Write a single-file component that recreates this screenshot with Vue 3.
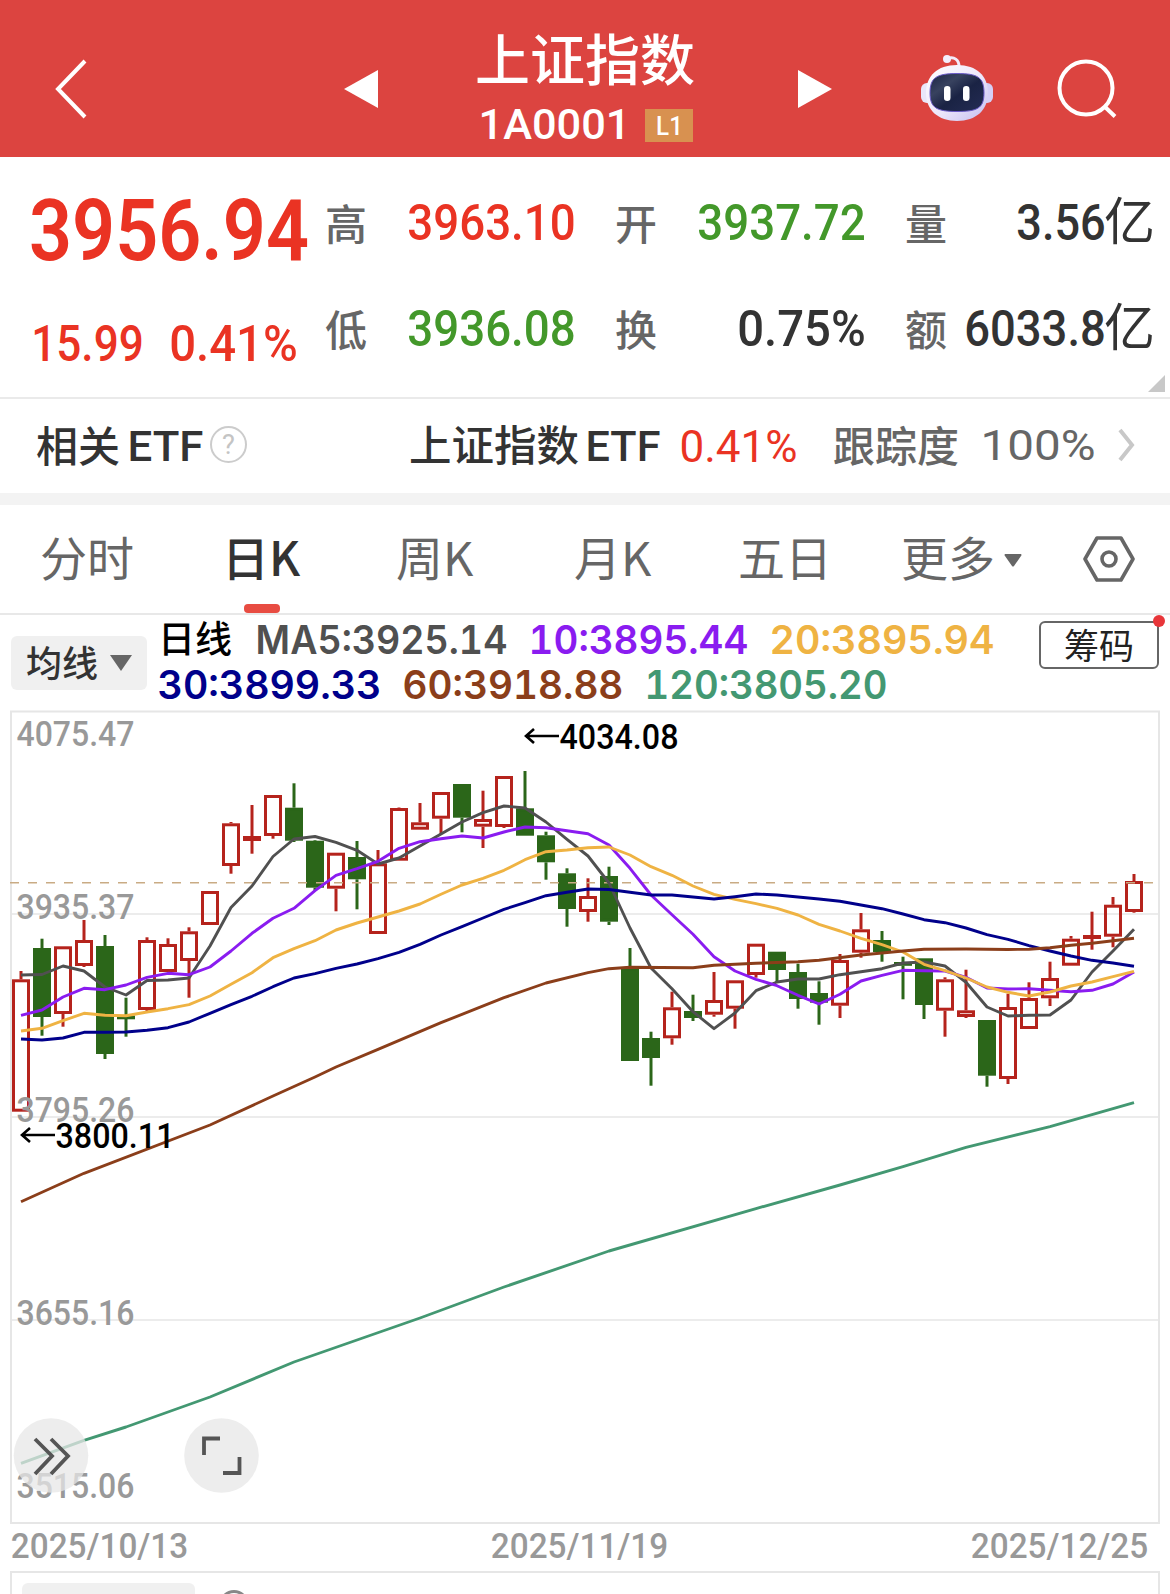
<script setup>
import { h } from 'vue'

/**
 * Index quote page: header, quote summary, period tabs and daily K chart
 */

// Condensed numerals: `cap` is the digit height, `w` the drawn width
const FitText = ({ text, w, cap }) => {
  const size = cap / 0.711
  return h('svg', { class: 'fit', width: w, height: cap }, [
    h('text', {
      x: -size * 0.035,
      y: cap,
      fill: 'currentColor',
      'font-size': size,
      textLength: w + size * 0.07,
      lengthAdjust: 'spacingAndGlyphs',
    }, text),
  ])
}
FitText.props = ['text', 'w', 'cap']

const stats = [
  { label: '高', value: '3963.10', w: 165, type: 'up' },
  { label: '开', value: '3937.72', w: 165, type: 'down' },
  { label: '量', value: '3.56', w: 86, unit: '亿' },
  { label: '低', value: '3936.08', w: 165, type: 'down' },
  { label: '换', value: '0.75%', w: 125 },
  { label: '额', value: '6033.8', w: 138, unit: '亿' },
]

const tabs = ['分时', '日K', '周K', '月K', '五日']

const averages = [
  [
    { text: 'MA5:3925.14', w: 249, color: '#505050' },
    { text: '10:3895.44', w: 217, color: '#8a1cf0' },
    { text: '20:3895.94', w: 222, color: '#efb343' },
  ],
  [
    { text: '30:3899.33', w: 221, color: '#00008b' },
    { text: '60:3918.88', w: 218, color: '#8b3e1a' },
    { text: '120:3805.20', w: 240, color: '#439872' },
  ],
]

const STEP = 21
const px = i => 21 + i * STEP

// direction, high, body top, body bottom, low
const candles = [
  ['r', 971, 979.3, 1111.7, 1111.7], ['g', 938.7, 948, 1017, 1035.7], ['r', 946.3, 946.3, 1014, 1026.7],
  ['r', 920, 940, 966, 967], ['g', 935, 946, 1054, 1059], ['g', 997.7, 1015.5, 1019, 1036.7],
  ['r', 937.3, 940, 1010, 1011.7], ['r', 938.3, 944, 972, 972], ['r', 927.3, 931.3, 961, 997.7],
  ['r', 891, 891, 925, 925], ['r', 822, 823.3, 866, 873.7], ['r', 805, 836, 841, 853.7],
  ['r', 795, 795, 836, 838.7], ['g', 783.3, 807.7, 840.7, 842], ['g', 840, 840.7, 887.7, 890.7],
  ['r', 852.7, 852.7, 888.7, 911.3], ['g', 841, 857, 879.3, 909.3], ['r', 850, 863.3, 934, 934],
  ['r', 807.5, 808, 860.7, 860.7], ['r', 803, 822.3, 829.7, 829.7], ['r', 792, 792, 818.7, 834],
  ['g', 784, 784, 817.7, 832.3], ['r', 790.7, 819, 826.7, 848], ['r', 776, 776, 827, 828],
  ['g', 771, 808.3, 835.7, 835.7], ['g', 831.7, 835.3, 862.3, 879.7], ['g', 868.3, 873.3, 909, 926.7],
  ['r', 878.3, 896, 912, 921.7], ['g', 866.7, 876, 921.7, 925], ['g', 948, 967.7, 1061, 1061],
  ['g', 1031.7, 1038, 1058, 1085.7], ['r', 991.7, 1007.3, 1038.3, 1044.7], ['g', 994.7, 1011, 1018, 1021],
  ['r', 972, 1000, 1014.7, 1016.7], ['r', 980.3, 980.3, 1008.7, 1028.7], ['r', 943.7, 943.7, 975, 977.7],
  ['g', 951.7, 951.7, 970, 982], ['g', 963.7, 972, 999, 1008.7], ['g', 981.3, 993, 1002.7, 1024.7],
  ['r', 954, 960, 1005.7, 1018], ['r', 913, 929.3, 952.7, 957.7], ['g', 931, 940, 952, 961.7],
  ['g', 956.7, 962, 965.7, 999.3], ['g', 958.3, 958.3, 1005, 1019], ['r', 977.3, 979.3, 1010.7, 1036.7],
  ['r', 969.7, 1010.3, 1017, 1018], ['g', 1020, 1020, 1075.7, 1086.7], ['r', 993.7, 1007, 1079, 1084],
  ['r', 982.3, 998, 1029, 1029], ['r', 961.7, 978, 998.3, 1006], ['r', 936, 938.7, 965.7, 965.7],
  ['r', 911.7, 935, 939, 949.7], ['r', 897, 904.7, 936.7, 947.3], ['r', 874, 881, 912, 912.7],
].map(([type, high, top, bottom, low], i) => ({ type, high, top, bottom, low, x: px(i) }))

// one y per candle
const dense = ys => ys.map((y, i) => `${px(i)},${y}`).join(' ')
// [candle index, y] pairs
const sparse = pts => pts.map(([i, y]) => `${px(i)},${y}`).join(' ')

const lines = [
  { color: '#505050', points: dense([975, 974.5, 966, 971, 987, 995, 980.5, 980, 978, 946, 907.5, 886, 856.5, 839, 836.5, 842.3, 850.3, 864, 858, 846, 834, 822, 812.7, 806, 808, 822, 839.3, 856, 883, 928, 968, 988.7, 1011.7, 1028.7, 1013, 990.7, 982, 979, 979, 974.7, 971.7, 968.7, 963, 962, 966, 982.3, 1007, 1016, 1015.3, 1015, 1000, 972, 951, 929.3]) },
  { color: '#8a1cf0', points: dense([1015.3, 1010, 997, 988.3, 989.7, 985, 977.3, 973.3, 974.7, 967, 951, 933.3, 918.3, 908.3, 890.7, 875.3, 868.7, 861.3, 848.3, 841.7, 838.7, 836, 838, 832, 827, 827.7, 830.7, 833.7, 845, 868.3, 895, 914.7, 934.3, 956.7, 971, 979.3, 985.7, 995.3, 1004, 994.3, 981, 975.3, 970.3, 970.7, 971, 977.3, 988, 989, 988.7, 990.3, 991.7, 990.3, 984, 972]) },
  { color: '#efb343', points: dense([1031, 1028.3, 1020.7, 1013.3, 1015.3, 1015.7, 1012, 1008.7, 1004.7, 996, 984.3, 972.7, 957.7, 948.7, 940.7, 930, 923, 917, 911, 904, 894.3, 885, 878.3, 870.3, 859.7, 851.7, 850, 847.7, 847, 855, 866.7, 875.3, 886, 894.3, 899.3, 903.7, 908.3, 915, 924.3, 931, 938.3, 944.7, 952, 964.3, 970.7, 978, 987, 992.3, 996, 992, 986, 982, 976.7, 971.3]) },
  { color: '#00008b', points: dense([1039, 1040, 1038, 1032.3, 1032.3, 1032, 1030.3, 1027.7, 1022, 1013.3, 1004.7, 996.3, 986.7, 978, 973.7, 968.3, 964, 958.7, 952.3, 944.3, 935, 926.7, 918, 909.3, 902.7, 895.7, 892.3, 889, 889.5, 892.3, 895, 895, 897, 899, 896.7, 894, 895, 897, 899, 901.3, 905, 908.7, 914, 919.7, 922.7, 928, 934.7, 939.3, 945.7, 951, 956, 960.3, 963, 966.3]) },
  { color: '#8b3e1a', points: sparse([[0, 1201.7], [3, 1173.3], [9, 1125], [12, 1096], [14, 1077], [15, 1067], [17, 1049.3], [20, 1022.7], [23, 997.7], [25, 983], [27, 972.7], [28, 968.7], [29, 967.3], [32, 967.7], [33, 965.3], [35, 963.3], [37, 961.7], [38, 960.3], [40, 955], [42, 951], [43, 949.3], [45, 949], [47, 949.5], [48, 949.3], [49, 947.7], [50, 945.3], [51, 943.3], [53, 938.3]]) },
  { color: '#439872', points: sparse([[0, 1463.3], [3, 1440.3], [5, 1427], [9, 1397], [13, 1362], [19, 1318], [23, 1287], [28, 1251], [35, 1208.6], [39, 1185], [42, 1166.7], [45, 1147.3], [49, 1126.7], [53, 1102.7]]) },
]

const axis = [
  { text: '4075.47', y: 746 },
  { text: '3935.37', y: 919 },
  { text: '3795.26', y: 1122 },
  { text: '3655.16', y: 1325 },
  { text: '3515.06', y: 1498 },
]

const dates = ['2025/10/13', '2025/11/19', '2025/12/25']
</script>

<template>
  <div class="page">
    <header class="header">
      <svg class="back" width="34" height="62" viewBox="0 0 34 62">
        <path d="M31 3 4 31l27 28" fill="none" stroke="#fff" stroke-width="4" />
      </svg>
      <svg class="prev" width="34" height="38" viewBox="0 0 34 38"><path d="M34 0v38L0 19z" fill="#fff" /></svg>
      <div class="title">
        <div class="name">上证指数</div>
        <div class="code">
          <FitText text="1A0001" :w="149" :cap="30" />
          <span class="badge"><FitText text="L1" :w="25" :cap="18" /></span>
        </div>
      </div>
      <svg class="next" width="34" height="38" viewBox="0 0 34 38"><path d="M0 0v38l34-19z" fill="#fff" /></svg>
      <svg class="robot" width="72" height="68" viewBox="0 0 72 68">
        <defs>
          <linearGradient id="shell" x1="0" y1="0" x2="1" y2="1">
            <stop offset="0" stop-color="#fff" />
            <stop offset=".55" stop-color="#ece6fa" />
            <stop offset="1" stop-color="#c3bdf0" />
          </linearGradient>
          <linearGradient id="visor" x1="0" y1="0" x2="1" y2="1">
            <stop offset="0" stop-color="#1b2444" />
            <stop offset=".3" stop-color="#38425f" />
            <stop offset=".55" stop-color="#1a2344" />
            <stop offset="1" stop-color="#242c54" />
          </linearGradient>
        </defs>
        <path d="M27 4.500c6-2 11 1 11 8" fill="none" stroke="#f3eafa" stroke-width="3" />
        <circle cx="26" cy="5" r="4" fill="#f3eefc" />
        <rect x="0" y="29" width="14" height="20" rx="6" fill="#e9e7fa" />
        <rect x="58" y="29" width="14" height="20" rx="6" fill="#d5cff6" />
        <path d="M36 11c20 0 31 11 31 28 0 17-12 28-31 28S5 56 5 39c0-17 11-28 31-28z" fill="url(#shell)" />
        <path d="M36 19.500c21 0 27 4 27 19.500s-7 18.500-27 18.500S9 54 9 39s6-19.500 27-19.500z" fill="url(#visor)" stroke="#6a5ac8" stroke-width="1" />
        <rect x="23" y="32" width="6.500" height="15" rx="3.200" fill="#fff" />
        <rect x="42" y="32" width="6.500" height="15" rx="3.200" fill="#fff" />
      </svg>
      <svg class="search" width="62" height="62" viewBox="0 0 62 62" fill="none" stroke="#fff" stroke-width="4">
        <circle cx="30" cy="30" r="26.500" />
        <path d="m48 48 11 10.500" />
      </svg>
    </header>

    <section class="quote">
      <div class="price up">
        <FitText class="bold" text="3956.94" :w="274" :cap="61" />
        <div class="change">
          <FitText text="15.99" :w="109" :cap="36" />
          <FitText text="0.41%" :w="125" :cap="36" />
        </div>
      </div>
      <div class="stats">
        <div v-for="s in stats" :key="s.label" class="stat">
          <span class="stat-label">{{ s.label }}</span>
          <span class="stat-value" :class="s.type">
            <FitText :text="s.value" :w="s.w" :cap="36" />
            <span v-if="s.unit" class="unit">{{ s.unit }}</span>
          </span>
        </div>
      </div>
      <svg class="corner" width="17" height="17" viewBox="0 0 17 17"><path d="M17 0v17H0z" fill="#c8c8c8" /></svg>
    </section>

    <section class="etf">
      <span class="etf-label">相关</span>
      <FitText class="etf-word" text="ETF" :w="73" :cap="30" />
      <span class="help"><FitText text="?" :w="11" :cap="19" /></span>
      <span class="etf-name">上证指数</span>
      <FitText class="etf-word" text="ETF" :w="72" :cap="30" />
      <FitText class="etf-rate up" text="0.41%" :w="115" :cap="32" />
      <span class="track">跟踪度</span>
      <FitText class="track-rate" text="100%" :w="112" :cap="30" />
      <svg class="more" width="20" height="34" viewBox="0 0 20 34">
        <path d="m3 2 12 15L3 32" fill="none" stroke="#c8c8c8" stroke-width="4" />
      </svg>
    </section>

    <nav class="tabs">
      <span v-for="(t, i) in tabs" :key="t" class="tab" :class="{ active: i === 1 }">{{ t }}</span>
      <span class="tab">更多<svg class="caret" width="18" height="13" viewBox="0 0 18 13"><path d="M1 0h16q1 1 0 2l-7 10q-1 1-2 0L1 2q-1-1 0-2z" fill="#666" /></svg></span>
      <svg class="settings" width="52" height="46" viewBox="0 0 52 46" fill="none" stroke="#666" stroke-width="3.600">
        <path d="M14 2h24l12 21-12 21H14L2 23z" stroke-linejoin="round" />
        <circle cx="26" cy="23" r="7" />
      </svg>
    </nav>

    <section class="legend">
      <button class="ma-button">
        <span>均线</span>
        <svg width="22" height="16" viewBox="0 0 22 16"><path d="M0 0h22L11 16z" fill="#666" /></svg>
      </button>
      <div class="ma-rows">
        <div v-for="(row, r) in averages" :key="r" class="ma-row">
          <span v-if="r === 0" class="ma-title">日线</span>
          <FitText v-for="m in row" :key="m.text" :text="m.text" :w="m.w" :cap="28" :style="{ color: m.color }" />
        </div>
      </div>
      <button class="chips">筹码<i class="dot"></i></button>
    </section>

    <section class="chart">
      <svg width="1170" height="820" viewBox="0 706 1170 820">
        <g stroke="#e6e6e6" stroke-width="2" fill="none">
          <rect x="11" y="711.500" width="1148" height="811.500" />
          <path d="M11 914H1159M11 1117H1159M11 1320H1159" stroke-width="1.500" />
        </g>
        <g v-for="c in candles" :key="c.x" :class="['candle', c.type]">
          <path v-if="c.high < c.top" :d="`M${c.x} ${c.high}V${c.top}`" />
          <path v-if="c.low > c.bottom" :d="`M${c.x} ${c.bottom}V${c.low}`" />
          <rect :x="c.x - 7.500" :y="c.top + 1.500" width="15" :height="Math.max(c.bottom - c.top - 3, 0.800)" />
        </g>
        <path d="M10 882.700H1153" stroke="#c9ab84" stroke-width="1.500" stroke-dasharray="9 9" />
        <polyline v-for="l in lines" :key="l.color" :points="l.points" :stroke="l.color" fill="none" stroke-width="2.900" stroke-linejoin="round" />
        <text v-for="a in axis" :key="a.text" class="axis" x="16.500" :y="a.y" textLength="118" lengthAdjust="spacingAndGlyphs">{{ a.text }}</text>
        <g fill="none" stroke="#000" stroke-width="2.600">
          <path d="M22 1135h33M30 1128l-8 7 8 7" />
          <path d="M526 736h33M534 729l-8 7 8 7" />
        </g>
        <text class="mark" x="55.500" y="1148" textLength="119" lengthAdjust="spacingAndGlyphs">3800.11</text>
        <text class="mark" x="559.500" y="749" textLength="119" lengthAdjust="spacingAndGlyphs">4034.08</text>
        <g fill="#e7e7e7" fill-opacity=".75">
          <circle cx="51" cy="1455.500" r="37.300" />
          <circle cx="221.500" cy="1455.500" r="37.300" />
        </g>
        <g fill="none" stroke="#555" stroke-width="3.800">
          <path d="m35 1439 17 17-17 18M51 1439l17 17-17 18" />
          <path d="M204 1455v-16.500h16M223 1473h16.500V1457" />
        </g>
      </svg>
    </section>

    <div class="dates">
      <FitText v-for="d in dates" :key="d" :text="d" :w="175" :cap="25" />
    </div>

    <section class="volume">
      <div class="volume-button"></div>
      <div class="volume-ring"></div>
    </section>
  </div>
</template>

<style>
body {
  margin: 0;
}
</style>

<style scoped>
.page {
  width: 1170px;
  height: 1594px;
  overflow: hidden;
  background: #fff;
  color: #333;
  font-family: 'Noto Sans CJK SC', sans-serif;
  line-height: 1;
}

.fit {
  display: block;
  flex: none;
  overflow: visible;
  font-family: Roboto, sans-serif;
  font-weight: 500;
}

.fit.bold {
  font-weight: 600;
}

.up {
  color: #ea3323;
}

.down {
  color: #43982a;
}

.header {
  display: flex;
  height: 157px;
  background: #dc4440;
  color: #fff;
}

.back {
  margin: 58px 0 0 54px;
}

.prev {
  margin: 70px 0 0 256px;
}

.title {
  width: 217px;
  margin: 29px 0 0 98px;
}

.name {
  margin-left: -1px;
  font-size: 55px;
  font-weight: 500;
  white-space: nowrap;
}

.code {
  display: flex;
  align-items: flex-start;
  margin: 25px 0 0 4px;
}

.badge {
  display: flex;
  align-items: center;
  justify-content: center;
  width: 48px;
  height: 33px;
  margin-left: 16px;
  background: #d89150;
}

.next {
  margin: 70px 0 0 105px;
}

.robot {
  margin: 54px 0 0 89px;
}

.search {
  margin: 58px 0 0 63px;
}

.quote {
  position: relative;
  display: flex;
  height: 240px;
  border-bottom: 2px solid #eaeaea;
}

.price {
  width: 293px;
  padding: 42px 0 0 32px;
}

.change {
  display: flex;
  gap: 29px;
  margin: 65px 0 0 1px;
}

.stats {
  display: grid;
  grid-template-columns: 249px 249px 249px;
  grid-auto-rows: 106px;
  column-gap: 41px;
  padding-top: 12px;
}

.stat,
.stat-value {
  display: flex;
  align-items: center;
}

.stat {
  justify-content: space-between;
}

.stat-label {
  padding-bottom: 1px;
  color: #666;
  font-size: 42px;
  font-weight: 500;
}

.unit {
  margin: -7px -1px 0 0;
  font-size: 51px;
}

.corner {
  position: absolute;
  right: 5px;
  bottom: 5px;
}

.etf {
  display: flex;
  align-items: center;
  height: 94px;
  padding: 0 32px 0 36px;
  border-bottom: 12px solid #f3f3f3;
  font-size: 42px;
  font-weight: 500;
}

.etf-label,
.etf-name,
.track {
  flex: none;
  padding-bottom: 5px;
  white-space: nowrap;
}

.etf-label {
  width: 84px;
}

.etf-word {
  margin-left: 9px;
}

.etf .help {
  display: flex;
  flex: none;
  box-sizing: border-box;
  align-items: center;
  justify-content: center;
  width: 37px;
  height: 37px;
  margin: -3px 0 0 8px;
  border: 2.5px solid #ccc;
  border-radius: 50%;
  color: #c4c4c4;
}

.etf .help .fit {
  font-weight: 400;
}

.etf-name {
  width: 169px;
  margin-left: 162px;
  font-size: 42.5px;
}

.etf-rate {
  margin-left: 22px;
  font-weight: 400;
}

.track {
  margin-left: 37px;
  color: #666;
}

.track-rate {
  margin: -2px 0 0 23px;
  color: #666;
  font-weight: 400;
}

.more {
  margin: -2px 0 0 23px;
}

.tabs {
  display: grid;
  grid-template-columns: 182px 174px 178px 164px 163px 182px 52px;
  box-sizing: border-box;
  align-items: center;
  justify-items: start;
  height: 110px;
  padding-left: 40px;
  border-bottom: 2px solid #e8e8e8;
  color: #666;
  font-size: 47px;
  font-weight: 400;
}

.tab {
  position: relative;
  padding-bottom: 8px;
  white-space: nowrap;
}

.tab.active {
  color: #333;
  font-weight: 500;
}

.tab.active::after {
  content: '';
  position: absolute;
  bottom: -26px;
  left: 50%;
  width: 36px;
  height: 9px;
  margin-left: -17px;
  border-radius: 4px;
  background: #e84c42;
}

.caret {
  margin-left: 9px;
  vertical-align: 9px;
}

.legend {
  display: flex;
  align-items: flex-start;
  height: 91px;
}

button {
  border: 0;
  padding: 0;
  font-family: inherit;
  line-height: 1;
}

.ma-button {
  display: flex;
  align-items: center;
  justify-content: center;
  gap: 12px;
  width: 136px;
  height: 54px;
  margin: 21px 0 0 11px;
  border-radius: 6px;
  background: #f0f0f0;
  color: #333;
  font-size: 36px;
  font-weight: 500;
}

.ma-button span {
  padding-bottom: 4px;
}

.ma-rows {
  width: 850px;
  margin: 2px 0 0 11px;
}

.ma-row {
  display: flex;
  align-items: center;
  gap: 24px;
  height: 45px;
}

.ma-row .fit {
  font-family: Inter, sans-serif;
  font-feature-settings: 'tnum';
  font-weight: 600;
}

.ma-row .fit:first-of-type {
  margin-left: 1px;
}

.ma-title {
  padding-bottom: 4px;
  color: #000;
  font-size: 37px;
  font-weight: 500;
}

.chips {
  position: relative;
  box-sizing: border-box;
  width: 120px;
  height: 48px;
  margin: 6px 0 0 31px;
  padding-bottom: 4px;
  border: 2px solid #666;
  border-radius: 6px;
  background: #fff;
  color: #222;
  font-size: 35px;
  font-weight: 400;
}

.dot {
  position: absolute;
  top: -8px;
  right: -8px;
  width: 12px;
  height: 12px;
  border-radius: 50%;
  background: #e8363a;
}

.chart svg {
  display: block;
}

.candle path {
  stroke-width: 3;
}

.candle rect {
  stroke-width: 3;
}

.candle.r {
  fill: none;
  stroke: #b5231c;
}

.candle.g {
  fill: #2b6619;
  stroke: #2b6619;
}

.axis,
.mark {
  font-family: Roboto, sans-serif;
  font-size: 35px;
  font-weight: 500;
}

.axis {
  fill: #999;
}

.mark {
  fill: #000;
}

.dates {
  display: flex;
  justify-content: space-between;
  height: 38px;
  padding: 7px 23px 0 12px;
  box-sizing: border-box;
  color: #999;
}

.volume {
  display: flex;
  gap: 24px;
  box-sizing: border-box;
  width: 1150px;
  height: 60px;
  margin: 7px 0 0 10px;
  padding: 10px;
  border: 2px solid #e6e6e6;
}

.volume-button {
  width: 173px;
  height: 40px;
  border-radius: 6px;
  background: #f0f0f0;
}

.volume-ring {
  width: 24px;
  height: 24px;
  margin-top: 7px;
  border: 3px solid #888;
  border-radius: 50%;
}
</style>
